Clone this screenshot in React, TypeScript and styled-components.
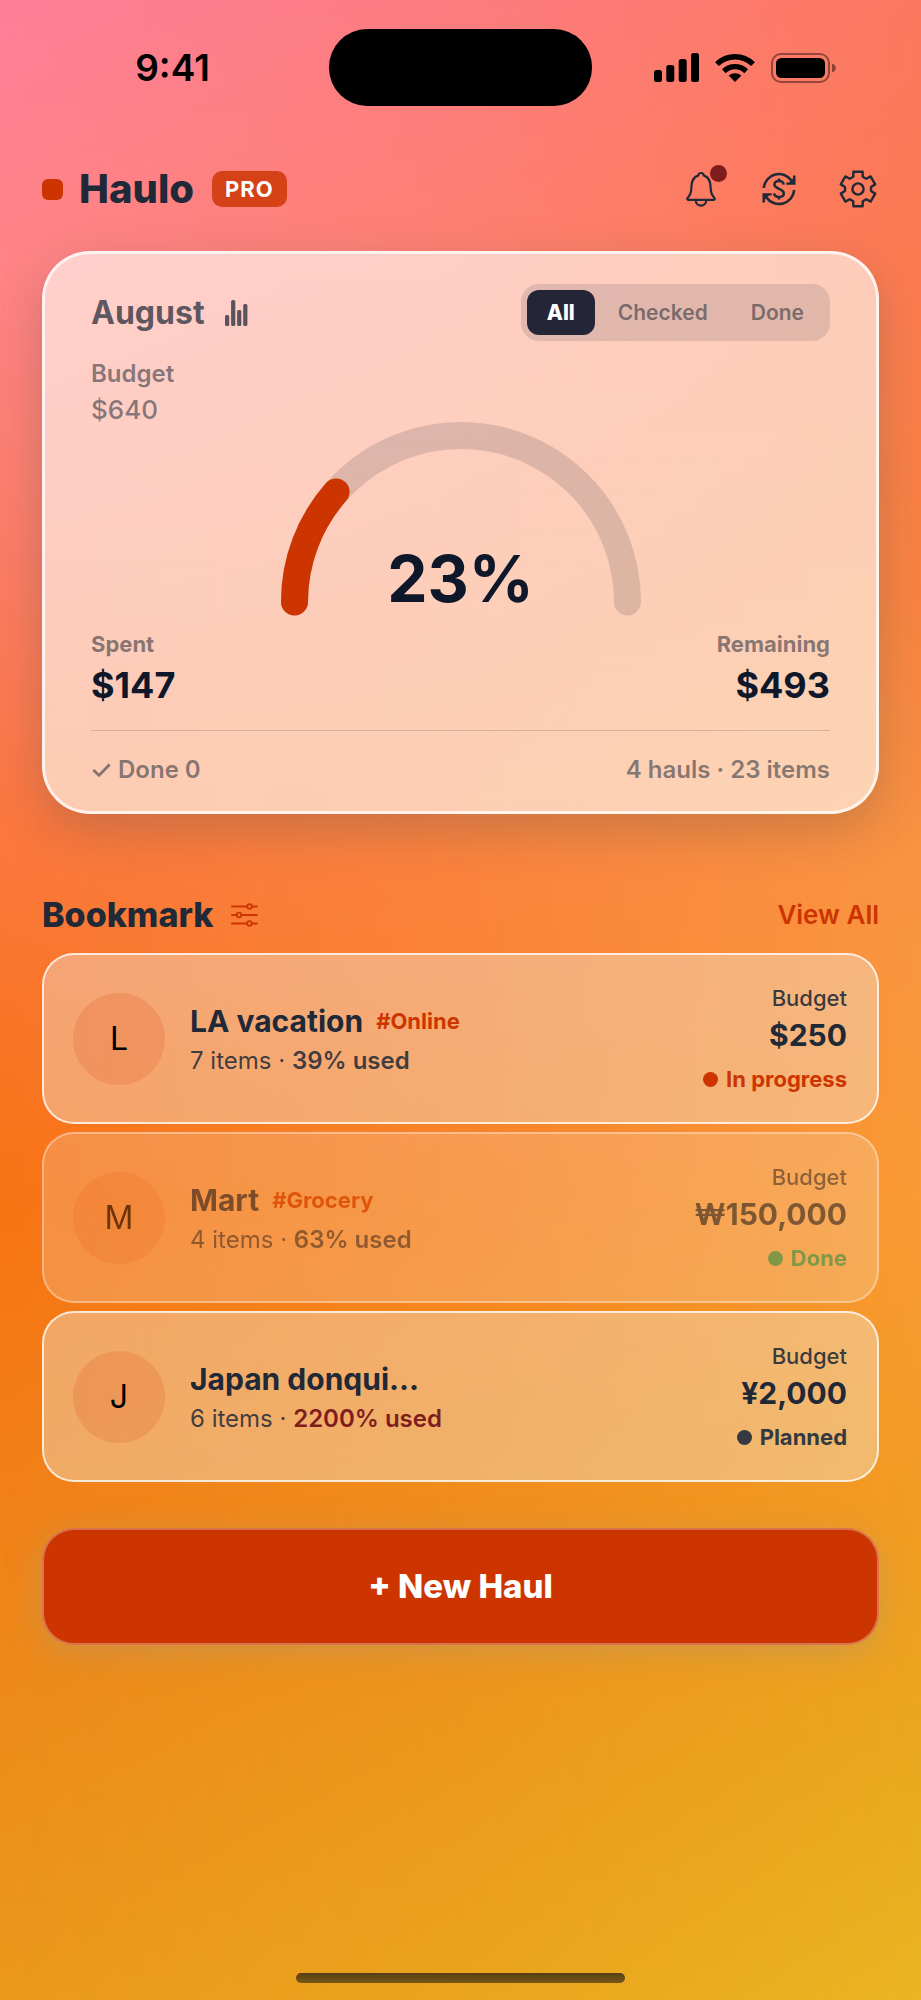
import React, { useState } from "react";
import styled, { createGlobalStyle } from "styled-components";

const ink = "#1f2937";
const accent = "#cc3500";

const GlobalStyle = createGlobalStyle`
  *, *::before, *::after { box-sizing: border-box; }
  body { margin: 0; background: #ea991c; }
  body, button { font-family: Inter, "Liberation Sans", sans-serif; }
  h1, h2, h3, p, dl, dd, dt, ul { margin: 0; padding: 0; font-size: inherit; }
`;

const Screen = styled.div`
  position: relative;
  isolation: isolate;
  display: flex;
  flex-direction: column;
  min-height: 100vh;
  color: ${ink};
  background: linear-gradient(
    to bottom,
    #fd7f98 0%, #ff8588 13%, #fb7c66 28%, #fb773f 41%,
    #f87313 60%, #f08218 76%, #ea991c 100%
  );

  &::before {
    content: "";
    position: absolute;
    inset: 0;
    z-index: -1;
    background: linear-gradient(
      to bottom,
      #fb7860 0%, #fc7a50 13%, #f88440 30%, #f99442 44%,
      #fa9a35 60%, #f19c22 76%, #e9a81f 88%, #ebb422 100%
    );
    mask-image: linear-gradient(to right, transparent, rgba(0, 0, 0, 0.43) 50%, #000);
  }
`;

const StatusBar = styled.div`
  display: grid;
  grid-template-columns: 1fr 263px 1fr;
  align-items: center;
  padding-top: 29px;
`;

const Clock = styled.time`
  padding-left: 16px;
  color: #000;
  font-size: 37px;
  font-weight: 600;
  line-height: 44px;
  text-align: center;
`;

const Island = styled.div`
  height: 77px;
  border-radius: 38px;
  background: #000;
`;

const Signals = styled.div`
  display: flex;
  align-items: center;
  justify-content: center;
  gap: 16px;
  padding-right: 24px;
`;

const Main = styled.main`
  display: flex;
  flex-direction: column;
  padding: 0 42px;
`;

const Header = styled.header`
  display: flex;
  align-items: center;
  justify-content: space-between;
  height: 48px;
  margin-top: 59px;
`;

const Brand = styled.div`
  display: flex;
  align-items: center;
`;

const BrandMark = styled.span`
  width: 21px;
  height: 21px;
  margin-right: 16px;
  border-radius: 6px;
  background: ${accent};
`;

const BrandName = styled.h1`
  font-size: 40px;
  font-weight: 800;
  line-height: 48px;
`;

const ProBadge = styled.span`
  margin-left: 18px;
  padding: 0 13px;
  border-radius: 10px;
  background: rgba(204, 53, 0, 0.82);
  color: #fff;
  font-size: 22px;
  font-weight: 700;
  line-height: 36px;
  letter-spacing: 1px;
`;

const HeaderActions = styled.div`
  display: flex;
  align-items: center;
  gap: 43px;
  padding-right: 2px;
`;

const IconButton = styled.button`
  position: relative;
  display: flex;
  padding: 0;
  border: 0;
  background: none;
  color: ${ink};
  cursor: pointer;
`;

const AlertDot = styled.span`
  position: absolute;
  top: -6px;
  right: -8px;
  width: 17px;
  height: 17px;
  border-radius: 50%;
  background: #7f1d1d;
`;

const SummaryCard = styled.section`
  margin-top: 38px;
  padding: 30px 46px 23px;
  border: 3px solid rgba(255, 255, 255, 0.75);
  border-radius: 48px;
  background: rgba(255, 252, 246, 0.63);
  box-shadow: 0 16px 48px rgba(80, 80, 80, 0.28);
`;

const SummaryTop = styled.div`
  display: flex;
  align-items: center;
  justify-content: space-between;
`;

const MonthRow = styled.div`
  display: flex;
  align-items: center;
  gap: 20px;
  color: rgba(31, 41, 55, 0.74);
`;

const Month = styled.h2`
  font-size: 32px;
  font-weight: 700;
  line-height: 40px;
`;

const Segments = styled.div`
  display: flex;
  gap: 3px;
  padding: 6px;
  border-radius: 18px;
  background: rgba(31, 41, 55, 0.13);
`;

const Segment = styled.button<{ $active: boolean }>`
  padding: 0 20px;
  border: 0;
  border-radius: 12px;
  background: ${(p) => (p.$active ? "#242638" : "transparent")};
  color: ${(p) => (p.$active ? "#fff" : "rgba(31, 41, 55, 0.55)")};
  font-size: 21px;
  font-weight: ${(p) => (p.$active ? 800 : 600)};
  line-height: 45px;
  cursor: pointer;
`;

const GaugeRow = styled.div`
  display: grid;
  grid-template-columns: 1fr 360px 1fr;
  margin-top: 15px;
`;

const BudgetTotal = styled.dl`
  color: rgba(31, 41, 55, 0.55);
  line-height: 36px;

  dt { font-size: 24px; font-weight: 600; }
  dd { font-size: 26px; font-weight: 500; }
`;

const Gauge = styled.div`
  display: grid;
  justify-items: center;
  align-items: end;
  padding-top: 66px;

  > * { grid-area: 1 / 1; }
  svg { display: block; }
`;

const GaugeValue = styled.p`
  padding-bottom: 5px;
  color: #0f172a;
  font-size: 64px;
  font-weight: 700;
  line-height: 64px;
`;

const Totals = styled.dl`
  display: flex;
  justify-content: space-between;
  margin-top: 10px;
`;

const Total = styled.div`
  &:last-child { text-align: right; }

  dt {
    color: rgba(31, 41, 55, 0.55);
    font-size: 22px;
    font-weight: 700;
    line-height: 36px;
  }
  dd {
    color: #0f172a;
    font-size: 36px;
    font-weight: 700;
    line-height: 46px;
  }
`;

const SummaryFooter = styled.div`
  display: flex;
  align-items: center;
  justify-content: space-between;
  margin-top: 22px;
  padding-top: 21px;
  border-top: 1px solid rgba(31, 41, 55, 0.18);
  color: rgba(31, 41, 55, 0.55);
  font-size: 24px;
  font-weight: 600;
  line-height: 36px;
`;

const DoneCount = styled.span`
  display: flex;
  align-items: center;
  gap: 6px;
`;

const SectionHead = styled.div`
  display: flex;
  align-items: center;
  justify-content: space-between;
  margin-top: 79px;
`;

const SectionTitle = styled.div`
  display: flex;
  align-items: center;
  gap: 18px;

  h2 {
    font-size: 34px;
    font-weight: 800;
    line-height: 44px;
  }
  button { color: ${accent}; }
`;

const ViewAll = styled.a`
  color: ${accent};
  font-size: 26px;
  font-weight: 600;
  line-height: 44px;
  text-decoration: none;
`;

const HaulList = styled.ul`
  display: flex;
  flex-direction: column;
  gap: 8px;
  margin-top: 16px;
  list-style: none;
`;

const HaulCard = styled.li<{ $faded: boolean }>`
  display: flex;
  align-items: center;
  min-height: 171px;
  padding: 28px 30px 28px 29px;
  border: 2px solid rgba(255, 255, 255, 0.75);
  border-radius: 32px;
  background: rgba(240, 238, 232, 0.38);
  opacity: ${(p) => (p.$faded ? 0.56 : 1)};
`;

const Avatar = styled.span`
  display: grid;
  flex: none;
  place-items: center;
  width: 92px;
  height: 92px;
  border-radius: 50%;
  background: rgba(224, 72, 20, 0.18);
  color: #000;
  font-size: 32px;
`;

const HaulText = styled.div`
  flex: 1;
  min-width: 0;
  padding-left: 25px;
`;

const TitleRow = styled.div`
  display: flex;
  align-items: center;
  gap: 13px;
  line-height: 44px;

  h3 {
    font-size: 30px;
    font-weight: 700;
  }
`;

const Tag = styled.span`
  color: ${accent};
  font-size: 22px;
  font-weight: 700;
`;

const Meta = styled.p<{ $over: boolean }>`
  color: rgba(31, 41, 55, 0.85);
  font-size: 24px;
  line-height: 36px;

  strong {
    color: ${(p) => (p.$over ? "#7f1d1d" : "inherit")};
    font-weight: 600;
  }
`;

const HaulSide = styled.div`
  display: flex;
  flex-direction: column;
  align-items: flex-end;
`;

const SideLabel = styled.span`
  color: rgba(31, 41, 55, 0.88);
  font-size: 22px;
  font-weight: 500;
  line-height: 30px;
`;

const Amount = styled.span`
  font-size: 30px;
  font-weight: 700;
  line-height: 44px;
`;

const Status = styled.span<{ $color: string }>`
  display: flex;
  align-items: center;
  gap: 8px;
  margin-top: 7px;
  color: ${(p) => p.$color};
  font-size: 22px;
  font-weight: 700;
  line-height: 30px;

  &::before {
    content: "";
    width: 15px;
    height: 15px;
    border-radius: 50%;
    background: currentColor;
  }
`;

const NewHaul = styled.button`
  margin-top: 46px;
  padding: 34px 24px;
  border: 2px solid rgba(255, 255, 255, 0.3);
  border-radius: 32px;
  background: ${accent};
  color: #fff;
  font-size: 33px;
  font-weight: 800;
  line-height: 45px;
  box-shadow: 0 8px 32px rgba(190, 150, 90, 0.6);
  cursor: pointer;
`;

const HomeIndicator = styled.div`
  width: 329px;
  height: 10px;
  margin: auto auto 17px;
  border-radius: 5px;
  background: linear-gradient(#573f14, #785617);
`;

function SignalBars() {
  return (
    <svg width="45" height="29" viewBox="0 0 45 29" aria-hidden="true">
      <rect x="0" y="17" width="8" height="12" rx="2.5" />
      <rect x="12.3" y="12" width="8" height="17" rx="2.5" />
      <rect x="24.7" y="6" width="8" height="23" rx="2.5" />
      <rect x="37" y="0" width="8" height="29" rx="2.5" />
    </svg>
  );
}

function Wifi() {
  return (
    <svg width="40" height="29" viewBox="0 0 40 29" aria-hidden="true">
      <path d="M20 29 13.6 22.6C17 19.3 23 19.3 26.4 22.6Z" strokeLinejoin="round" />
      <g fill="none" stroke="#000" strokeWidth="5.4">
        <path d="M2 11.2A25.6 25.6 0 0 1 38 11.2" />
        <path d="M8.8 18.2A16 16 0 0 1 31.2 18.2" />
      </g>
    </svg>
  );
}

function Battery() {
  return (
    <svg width="65" height="30" viewBox="0 0 65 30" aria-hidden="true">
      <rect x="1" y="1" width="57" height="28" rx="9" fill="none" stroke="#000" strokeOpacity="0.42" strokeWidth="2" />
      <rect x="5" y="5" width="49" height="20" rx="5.5" />
      <path d="M61 10.5C66 12 66 18 61 19.5Z" fillOpacity="0.45" />
    </svg>
  );
}

function Bell() {
  return (
    <svg width="34" height="36" viewBox="0 0 34 36" fill="none" stroke="currentColor" strokeWidth="2.2" strokeLinejoin="round" aria-hidden="true">
      <path d="M13.3 4.4C13.3 1.2 18.7 1.2 18.7 4.4C24 6.4 25.6 10.5 25.6 16C25.6 22 27 24.6 29.4 27C30.2 27.9 29.8 28.8 28.8 28.8H3.2C2.2 28.8 1.8 27.9 2.6 27C5 24.6 6.4 22 6.4 16C6.4 10.5 8 6.4 13.3 4.4Z" />
      <path d="M10.6 29C11 36.6 21 36.6 21.4 29" />
    </svg>
  );
}

function CurrencyCycle() {
  return (
    <svg width="34" height="34" viewBox="0 0 34 34" fill="none" stroke="currentColor" strokeWidth="2.6" aria-hidden="true">
      <path d="M1.8 16A15.2 15.2 0 0 1 29.5 8.6" />
      <path d="M32.2 18A15.2 15.2 0 0 1 4.5 25.4" />
      <g fill="currentColor" stroke="none">
        <path d="M33.5 3.5V12.7H24.3V10.4H27L31 6.5V3.5Z" />
        <path d="M.5 30.5V21.3H9.7V23.6H7L3 27.5V30.5Z" />
      </g>
      <path d="M21.6 12.6C21.2 7.8 12.4 7.8 12.4 12.6C12.4 17.4 21.8 16.4 21.8 21.4C21.8 26.2 12.4 26.2 12.2 21.4M17 6.5V9.5M17 24.5V27.5" />
    </svg>
  );
}

// Outline of a gear with six teeth, starting from the one at the top.
const gearPath = (() => {
  const profile: [number, number][] = [
    [-30, 13], [-21, 13.2], [-15, 17.8], [15, 17.8], [21, 13.2],
  ];
  const points: string[] = [];
  for (let tooth = 0; tooth < 6; tooth += 1) {
    profile.forEach(([offset, radius]) => {
      const angle = ((tooth * 60 + offset) * Math.PI) / 180;
      points.push(`${(19 + radius * Math.sin(angle)).toFixed(2)} ${(19 - radius * Math.cos(angle)).toFixed(2)}`);
    });
  }
  return `M${points.join("L")}Z`;
})();

function Gear() {
  return (
    <svg width="38" height="38" viewBox="0 0 38 38" fill="none" stroke="currentColor" strokeWidth="2.4" strokeLinejoin="round" aria-hidden="true">
      <path d={gearPath} />
      <circle cx="19" cy="19" r="5.6" />
    </svg>
  );
}

function Bars() {
  return (
    <svg width="24" height="26" viewBox="0 0 24 26" fill="currentColor" aria-hidden="true">
      <rect x="0" y="15" width="4.2" height="11" rx="1.5" />
      <rect x="6.1" y="0" width="4.2" height="26" rx="1.5" />
      <rect x="12.1" y="10" width="4.2" height="16" rx="1.5" />
      <rect x="18.2" y="4" width="4.2" height="22" rx="1.5" />
    </svg>
  );
}

function Check() {
  return (
    <svg width="21" height="20" viewBox="0 0 21 20" fill="none" stroke="currentColor" strokeWidth="2.8" aria-hidden="true">
      <path d="M2.4 10 8 15.4 18.6 4.6" />
    </svg>
  );
}

function Sliders() {
  const rows = [[3.5, 18.5], [12, 8], [20.5, 18.5]];
  return (
    <svg width="27" height="24" viewBox="0 0 27 24" fill="none" stroke="currentColor" strokeWidth="1.8" strokeLinecap="round" aria-hidden="true">
      {rows.map(([y, x]) => (
        <g key={y}>
          <path d={`M1 ${y}H${x - 2.2}M${x + 2.2} ${y}H26`} />
          <circle cx={x} cy={y} r="2.3" />
        </g>
      ))}
    </svg>
  );
}

function GaugeArc({ share }: { share: number }) {
  const radius = 166.5;
  const angle = Math.PI * share;
  const x = 180 - radius * Math.cos(angle);
  const y = 180 - radius * Math.sin(angle);
  return (
    <svg width="360" height="194" viewBox="0 0 360 194" fill="none" strokeWidth="27" strokeLinecap="round" aria-hidden="true">
      <path d="M13.5 180A166.5 166.5 0 0 1 346.5 180" stroke="#1f2937" strokeOpacity="0.15" />
      <path d={`M13.5 180A166.5 166.5 0 0 1 ${x} ${y}`} stroke={accent} />
    </svg>
  );
}

interface Haul {
  initial: string;
  title: string;
  tag?: string;
  items: number;
  used: number;
  budget: string;
  status: string;
  color: string;
}

const hauls: Haul[] = [
  { initial: "L", title: "LA vacation", tag: "#Online", items: 7, used: 39, budget: "$250", status: "In progress", color: accent },
  { initial: "M", title: "Mart", tag: "#Grocery", items: 4, used: 63, budget: "₩150,000", status: "Done", color: "#259b5c" },
  { initial: "J", title: "Japan donqui...", items: 6, used: 2200, budget: "¥2,000", status: "Planned", color: "#343a40" },
];

const filters = ["All", "Checked", "Done"];

export default function App() {
  const [filter, setFilter] = useState("All");

  return (
    <Screen>
      <GlobalStyle />
      <StatusBar>
        <Clock>9:41</Clock>
        <Island />
        <Signals>
          <SignalBars />
          <Wifi />
          <Battery />
        </Signals>
      </StatusBar>

      <Main>
        <Header>
          <Brand>
            <BrandMark />
            <BrandName>Haulo</BrandName>
            <ProBadge>PRO</ProBadge>
          </Brand>
          <HeaderActions>
            <IconButton type="button" aria-label="Notifications">
              <Bell />
              <AlertDot />
            </IconButton>
            <IconButton type="button" aria-label="Currency">
              <CurrencyCycle />
            </IconButton>
            <IconButton type="button" aria-label="Settings">
              <Gear />
            </IconButton>
          </HeaderActions>
        </Header>

        <SummaryCard>
          <SummaryTop>
            <MonthRow>
              <Month>August</Month>
              <Bars />
            </MonthRow>
            <Segments role="group" aria-label="Filter">
              {filters.map((name) => (
                <Segment
                  key={name}
                  type="button"
                  $active={name === filter}
                  aria-pressed={name === filter}
                  onClick={() => setFilter(name)}
                >
                  {name}
                </Segment>
              ))}
            </Segments>
          </SummaryTop>

          <GaugeRow>
            <BudgetTotal>
              <dt>Budget</dt>
              <dd>$640</dd>
            </BudgetTotal>
            <Gauge>
              <GaugeArc share={0.23} />
              <GaugeValue>23%</GaugeValue>
            </Gauge>
          </GaugeRow>

          <Totals>
            <Total>
              <dt>Spent</dt>
              <dd>$147</dd>
            </Total>
            <Total>
              <dt>Remaining</dt>
              <dd>$493</dd>
            </Total>
          </Totals>

          <SummaryFooter>
            <DoneCount>
              <Check />
              Done 0
            </DoneCount>
            <span>4 hauls · 23 items</span>
          </SummaryFooter>
        </SummaryCard>

        <SectionHead>
          <SectionTitle>
            <h2>Bookmark</h2>
            <IconButton type="button" aria-label="Sort and filter">
              <Sliders />
            </IconButton>
          </SectionTitle>
          <ViewAll href="#all">View All</ViewAll>
        </SectionHead>

        <HaulList>
          {hauls.map((haul) => (
            <HaulCard key={haul.title} $faded={haul.status === "Done"}>
              <Avatar>{haul.initial}</Avatar>
              <HaulText>
                <TitleRow>
                  <h3>{haul.title}</h3>
                  {haul.tag && <Tag>{haul.tag}</Tag>}
                </TitleRow>
                <Meta $over={haul.used > 100}>
                  {haul.items} items · <strong>{haul.used}% used</strong>
                </Meta>
              </HaulText>
              <HaulSide>
                <SideLabel>Budget</SideLabel>
                <Amount>{haul.budget}</Amount>
                <Status $color={haul.color}>{haul.status}</Status>
              </HaulSide>
            </HaulCard>
          ))}
        </HaulList>

        <NewHaul type="button">+ New Haul</NewHaul>
      </Main>

      <HomeIndicator />
    </Screen>
  );
}
